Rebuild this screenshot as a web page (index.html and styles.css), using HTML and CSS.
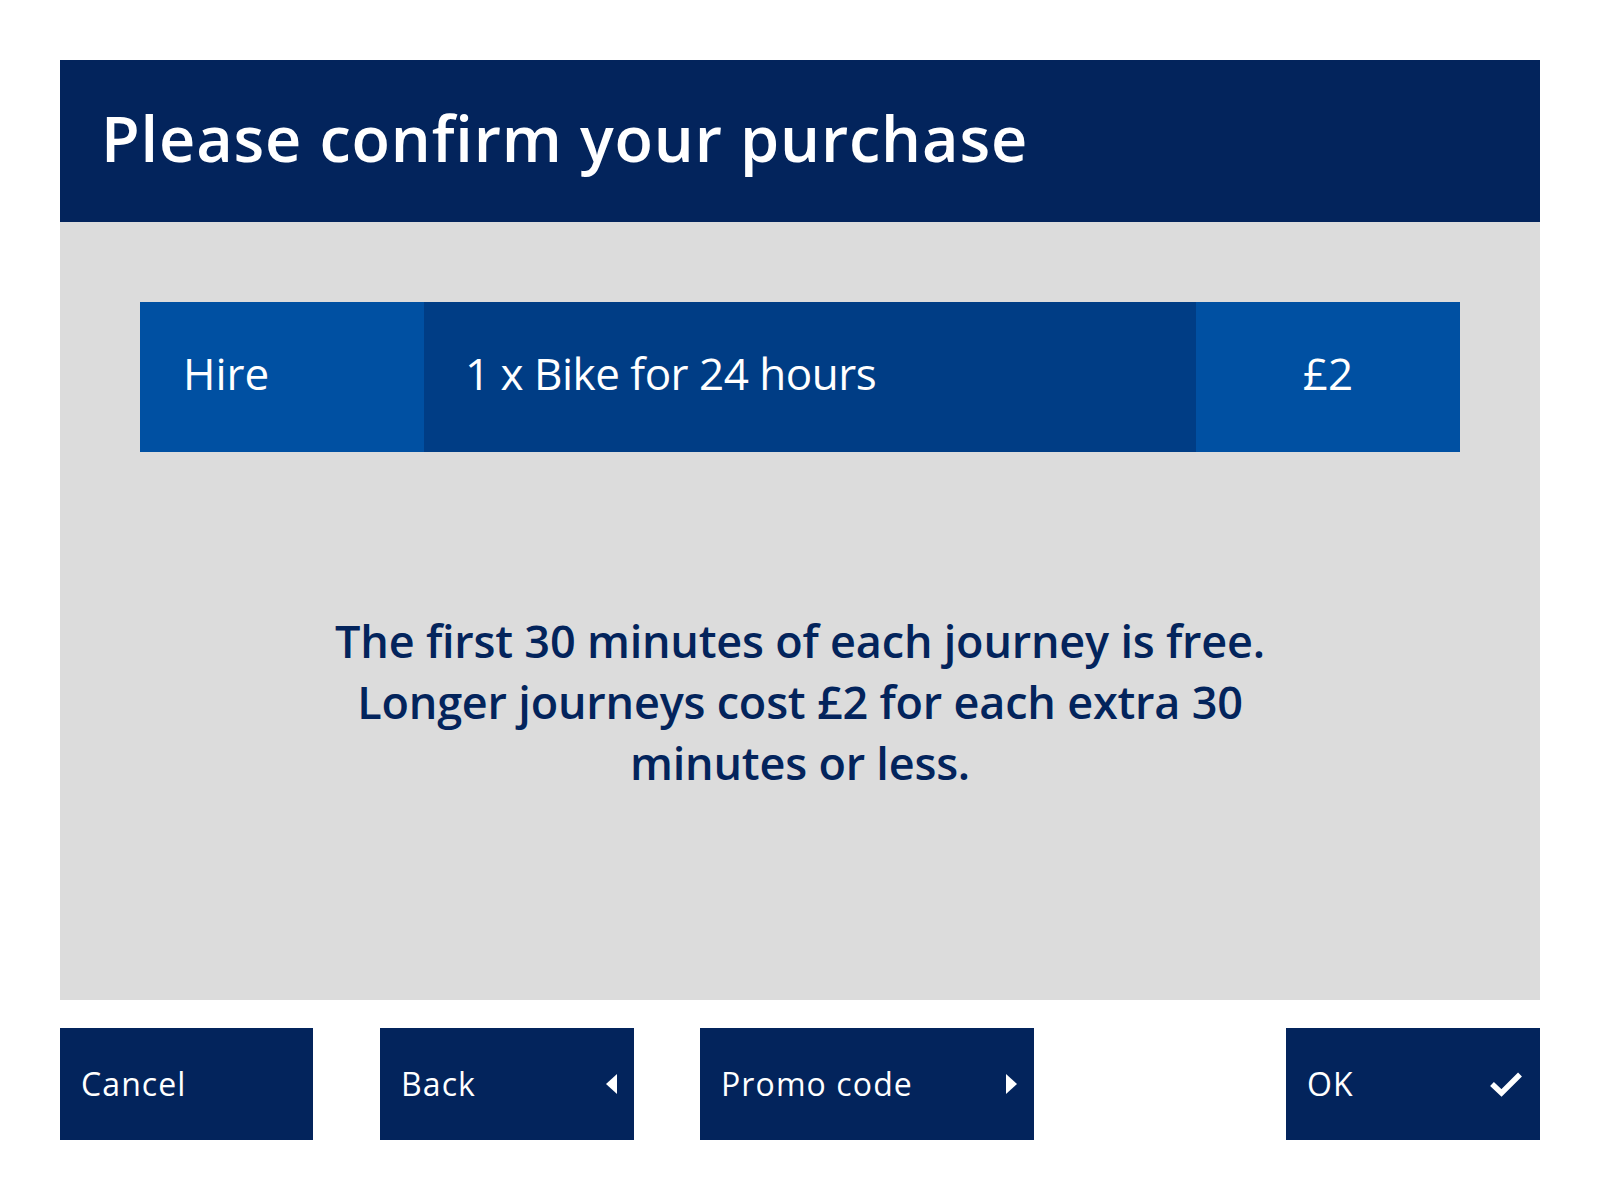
FILE: index.html
```html
<!DOCTYPE html>
<html lang="en">
<head>
<meta charset="utf-8">
<title>Please confirm your purchase</title>
<link rel="stylesheet" href="styles.css">
</head>
<body>
<div class="screen">
  <header class="title-bar">
    <h1 class="title">Please confirm your purchase</h1>
  </header>
  <main class="panel">
    <div class="summary-row">
      <div class="cell cell-type">Hire</div>
      <div class="cell cell-desc">1 x Bike for 24 hours</div>
      <div class="cell cell-price">£2</div>
    </div>
    <p class="info">The first 30 minutes of each journey is free. Longer journeys cost £2 for each extra 30 minutes or less.</p>
  </main>
  <nav class="actions">
    <button class="btn btn-cancel" type="button"><span class="btn-label">Cancel</span></button>
    <button class="btn btn-back" type="button"><span class="btn-label">Back</span>
      <svg class="icon icon-tri" width="11" height="20" viewBox="0 0 11 20"><polygon points="11,0 11,20 0,10" fill="#fff"/></svg>
    </button>
    <button class="btn btn-promo" type="button"><span class="btn-label">Promo code</span>
      <svg class="icon icon-tri" width="11" height="20" viewBox="0 0 11 20"><polygon points="0,0 11,10 0,20" fill="#fff"/></svg>
    </button>
    <button class="btn btn-ok" type="button"><span class="btn-label">OK</span>
      <svg class="icon icon-check" width="34" height="26" viewBox="0 0 34 26"><polyline points="3,13 12.5,22 31,3.5" fill="none" stroke="#fff" stroke-width="5.5" stroke-linejoin="miter" stroke-linecap="butt"/></svg>
    </button>
  </nav>
</div>
</body>
</html>
```

FILE: styles.css
```css
* { box-sizing: border-box; }

html, body {
  margin: 0;
  padding: 0;
  background: #ffffff;
}

body {
  font-family: "Open Sans", "Noto Sans", "Liberation Sans", sans-serif;
  color: #03245c;
}

.screen {
  width: 1600px;
  padding: 60px 60px 0 60px;
}

.title-bar {
  background: #03245c;
  height: 162px;
  display: flex;
  align-items: center;
  padding-left: 41px;
}

.title {
  margin: 0;
  color: #ffffff;
  font-size: 63px;
  font-weight: 600;
  letter-spacing: 0.85px;
  line-height: 1;
  padding-bottom: 8px;
}

.panel {
  background: #dcdcdc;
  height: 778px;
  padding: 80px 80px 0 80px;
}

.summary-row {
  display: flex;
  height: 150px;
  color: #ffffff;
  font-size: 44px;
}

.cell {
  display: flex;
  align-items: center;
  height: 100%;
  padding-bottom: 8px;
}

.cell-type {
  width: 284px;
  background: #0050a2;
  padding-left: 43px;
}

.cell-desc {
  width: 772px;
  background: #003d85;
  padding-left: 41px;
  letter-spacing: -0.5px;
}

.cell-price {
  width: 264px;
  background: #0050a2;
  justify-content: center;
}

.info {
  margin: 158px auto 0 auto;
  max-width: 960px;
  text-align: center;
  font-size: 45px;
  font-weight: 600;
  line-height: 61px;
  letter-spacing: -0.2px;
  color: #03245c;
}

.actions {
  display: flex;
  margin-top: 28px;
  height: 112px;
}

.btn {
  display: flex;
  align-items: center;
  justify-content: space-between;
  height: 112px;
  border: 0;
  margin: 0;
  background: #03245c;
  color: #ffffff;
  font-family: inherit;
  font-size: 32px;
  font-weight: 400;
  letter-spacing: 1.1px;
  padding: 0 17px 0 21px;
  cursor: pointer;
}

.btn-label { line-height: 1; }

.btn-cancel { width: 253px; }
.btn-back { width: 254px; margin-left: 67px; }
.btn-promo { width: 334px; margin-left: 66px; }
.btn-ok { width: 254px; margin-left: auto; }

.icon { display: block; flex: none; }
```
